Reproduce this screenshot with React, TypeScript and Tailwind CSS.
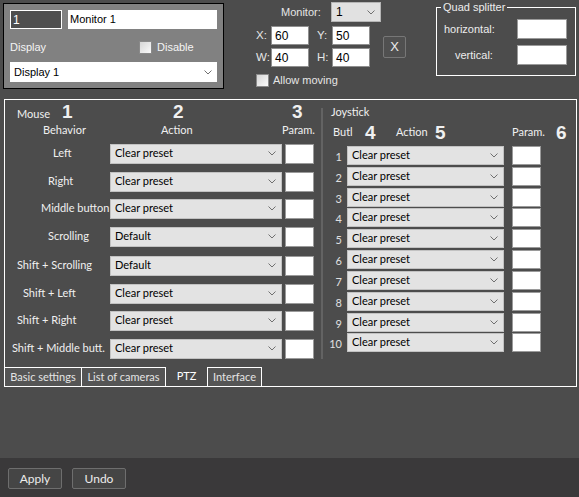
import React from "react";

const ms = "font-['Liberation_Sans',Arial,sans-serif]";
const ui = "font-['Lato','Open_Sans',sans-serif]";

function Chevron() {
  return (
    <svg width="8" height="5" viewBox="0 0 8 5" className="shrink-0">
      <polyline points="0.5,0.5 4,4 7.5,0.5" fill="none" stroke="#707070" strokeWidth="1" />
    </svg>
  );
}

function Combo({ text, className, font, size }: { text: string; className: string; font: string; size: string }) {
  return (
    <div className={`flex shrink-0 items-center justify-between pl-[4px] pr-[5px] text-black ${className}`}>
      <span className={`${font} ${size} whitespace-nowrap`}>{text}</span>
      <Chevron />
    </div>
  );
}

function Box({ className, value }: { className: string; value?: string }) {
  return (
    <div className={`flex shrink-0 items-center border border-[#8f8f8f] bg-white pl-[3px] text-[12px] text-black ${ms} ${className}`}>
      {value}
    </div>
  );
}

function Check() {
  return <div className="h-[13px] w-[13px] shrink-0 border border-[#8a8a8a] bg-gradient-to-br from-[#d6d6d6] to-[#fbfbfb]" />;
}

const mouseRows = [
  { label: "Left", pl: "pl-[48px]", mt: "mt-[0px]", v: "Clear preset" },
  { label: "Right", pl: "pl-[43px]", mt: "mt-[8px]", v: "Clear preset" },
  { label: "Middle button", pl: "pl-[36px]", mt: "mt-[7px]", v: "Clear preset" },
  { label: "Scrolling", pl: "pl-[43px]", mt: "mt-[8px]", v: "Default" },
  { label: "Shift + Scrolling", pl: "pl-[12px]", mt: "mt-[9px]", v: "Default" },
  { label: "Shift + Left", pl: "pl-[18px]", mt: "mt-[8px]", v: "Clear preset" },
  { label: "Shift + Right", pl: "pl-[12px]", mt: "mt-[7px]", v: "Clear preset" },
  { label: "Shift + Middle butt.", pl: "pl-[7px]", mt: "mt-[8px]", v: "Clear preset" },
];

const joyGaps = ["mt-[0px]", "mt-[2px]", "mt-[2px]", "mt-[1px]", "mt-[2px]", "mt-[2px]", "mt-[2px]", "mt-[2px]", "mt-[2px]", "mt-[1px]"];

export default function App() {
  return (
    <div className={`flex h-[497px] w-[579px] flex-col overflow-hidden bg-[#4c4c4c] text-[11px] ${ms}`}>
      {/* top area */}
      <div className="flex h-[99px] shrink-0 items-start">
        <div className="ml-[3px] mt-[3px] h-[86px] w-[221px] shrink-0 border border-black bg-[#818181] pl-[6px] pt-[6px]">
          <div className="flex h-[19px] gap-[6px]">
            <div className="flex w-[52px] items-center border border-white bg-[#4e4e4e] pl-[2px] text-[12px] text-white">1</div>
            <div className="flex w-[149px] items-center bg-white pl-[2px] text-[11px] text-black">Monitor 1</div>
          </div>
          <div className="mt-[11px] flex h-[14px] items-center text-[#f4f4f4]">
            <span className="w-[129px]">Display</span>
            <Check />
            <span className="ml-[5px]">Disable</span>
          </div>
          <Combo className="mt-[8px] h-[20px] w-[207px] bg-white" font={ms} size="text-[11px]" text="Display 1" />
        </div>

        <div className="ml-[32px] mt-[2px] w-[150px] shrink-0 text-[#e6e6e6]">
          <div className="flex h-[20px] items-center">
            <span className="ml-[25px] w-[50px]">Monitor:</span>
            <Combo className="h-[20px] w-[50px] border border-[#b5b5b5] bg-[#e1e1e1]" font={ms} size="text-[12px]" text="1" />
          </div>
          <div className="mt-[4px] flex items-center">
            <div>
              <div className="flex h-[19px] items-center text-[11.5px]">
                <span className="w-[15px]">X:</span>
                <Box className="h-[19px] w-[38px]" value="60" />
                <span className="ml-[8px] w-[15px]">Y:</span>
                <Box className="h-[19px] w-[38px]" value="50" />
              </div>
              <div className="mt-[3px] flex h-[19px] items-center text-[11.5px]">
                <span className="w-[15px]">W:</span>
                <Box className="h-[19px] w-[38px]" value="40" />
                <span className="ml-[8px] w-[15px]">H:</span>
                <Box className="h-[19px] w-[38px]" value="40" />
              </div>
            </div>
            <div className="ml-[13px] flex h-[22px] w-[23px] items-center justify-center rounded-[2px] border border-[#777777] bg-[#505050] text-[13px] text-[#ececec]">
              X
            </div>
          </div>
          <div className="mt-[5px] flex items-center">
            <Check />
            <span className="ml-[4px]">Allow moving</span>
          </div>
        </div>

        <fieldset className="ml-[30px] h-[76px] w-[140px] shrink-0 border border-white text-[#ececec]">
          <legend className="ml-[4px] px-[2px] leading-[14px]">Quad splitter</legend>
          <div className="mt-[5px] flex items-center">
            <span className="w-[80px] pl-[7px]">horizontal:</span>
            <div className="h-[20px] w-[50px] border border-[#9a9a9a] bg-white" />
          </div>
          <div className="mt-[6px] flex items-center">
            <span className="w-[80px] pl-[18px]">vertical:</span>
            <div className="h-[20px] w-[50px] border border-[#9a9a9a] bg-white" />
          </div>
        </fieldset>
      </div>

      {/* main panel */}
      <div className="ml-[4px] flex h-[288px] w-[573px] shrink-0 flex-col border border-white">
        <div className="flex flex-1">
          {/* mouse */}
          <div className={`w-[316px] shrink-0 text-[#f0f0f0] ${ui}`}>
            <div className="flex items-baseline pt-[2px]">
              <span className="w-[57px] pl-[12px] text-[11px]">Mouse</span>
              <span className={`w-[111px] text-[19px] font-bold leading-[19px] ${ms}`}>1</span>
              <span className={`w-[119px] text-[19px] font-bold leading-[19px] ${ms}`}>2</span>
              <span className={`text-[19px] font-bold leading-[19px] ${ms}`}>3</span>
            </div>
            <div className="flex text-[11px] leading-[13px]">
              <span className="w-[156px] pl-[38px]">Behavior</span>
              <span className="w-[121px]">Action</span>
              <span>Param.</span>
            </div>
            <div className="mt-[8px] flex flex-col">
              {mouseRows.map((r) => (
                <div key={r.label} className={`flex h-[20px] items-center ${r.mt}`}>
                  <span className={`w-[105px] shrink-0 whitespace-nowrap text-[11px] ${r.pl}`}>{r.label}</span>
                  <Combo className="h-[20px] w-[172px] border border-[#c2c2c2] bg-[#e3e3e3]" font={ui} size="text-[11px]" text={r.v} />
                  <div className="ml-[3px] h-[20px] w-[29px] border border-[#9a9a9a] bg-white" />
                </div>
              ))}
            </div>
          </div>

          {/* divider */}
          <div className="mt-[8px] h-[251px] w-[2px] shrink-0 bg-[#636363]" />

          {/* joystick */}
          <div className={`flex-1 text-[#f0f0f0] ${ui}`}>
            <div className="pl-[8px] pt-[5px] text-[11px] leading-[14px]">Joystick</div>
            <div className="mt-[4px] flex items-start">
              <span className="mt-[2px] w-[42px] pl-[10px] text-[11px] leading-[14px]">Butl</span>
              <span className={`w-[31px] text-[19px] font-bold leading-[19px] ${ms}`}>4</span>
              <span className="mt-[2px] w-[39px] text-[11px] leading-[14px]">Action</span>
              <span className={`w-[77px] text-[19px] font-bold leading-[19px] ${ms}`}>5</span>
              <span className="mt-[2px] w-[44px] text-[11px] leading-[14px]">Param.</span>
              <span className={`text-[19px] font-bold leading-[19px] ${ms}`}>6</span>
            </div>
            <div className="mt-[4px] flex flex-col">
              {joyGaps.map((g, i) => (
                <div key={i} className={`flex h-[19px] items-center ${g}`}>
                  <span className="mt-[4px] w-[19px] shrink-0 text-right text-[11px] text-[#e0e0e0]">{i + 1}</span>
                  <Combo className="ml-[5px] h-[19px] w-[157px] border border-[#c2c2c2] bg-[#e3e3e3]" font={ui} size="text-[11px]" text="Clear preset" />
                  <div className="ml-[8px] h-[19px] w-[29px] border border-[#9a9a9a] bg-white" />
                </div>
              ))}
            </div>
          </div>
        </div>

        {/* tabs */}
        <div className={`flex h-[19px] shrink-0 text-[11px] text-[#e4e4e4] ${ui}`}>
          <div className="flex w-[77px] items-center justify-center border-r border-t border-white bg-[#555555]">Basic settings</div>
          <div className="flex w-[84px] items-center justify-center border-r border-t border-white bg-[#555555]">List of cameras</div>
          <div className="flex w-[41px] items-center justify-center pb-[1px] text-white">PTZ</div>
          <div className="flex w-[55px] items-center justify-center border-x border-t border-white bg-[#555555]">Interface</div>
        </div>
      </div>

      <div className="flex-1" />

      {/* footer */}
      <div className={`flex h-[39px] shrink-0 gap-[10px] bg-[#3a393a] pl-[8px] pt-[10px] text-[12px] text-[#ececec] ${ui}`}>
        <div className="flex h-[21px] w-[54px] items-center justify-center rounded-[2px] border border-[#6e6e6e] bg-[#454545]">Apply</div>
        <div className="flex h-[21px] w-[54px] items-center justify-center rounded-[2px] border border-[#6e6e6e] bg-[#454545]">Undo</div>
      </div>
    </div>
  );
}
